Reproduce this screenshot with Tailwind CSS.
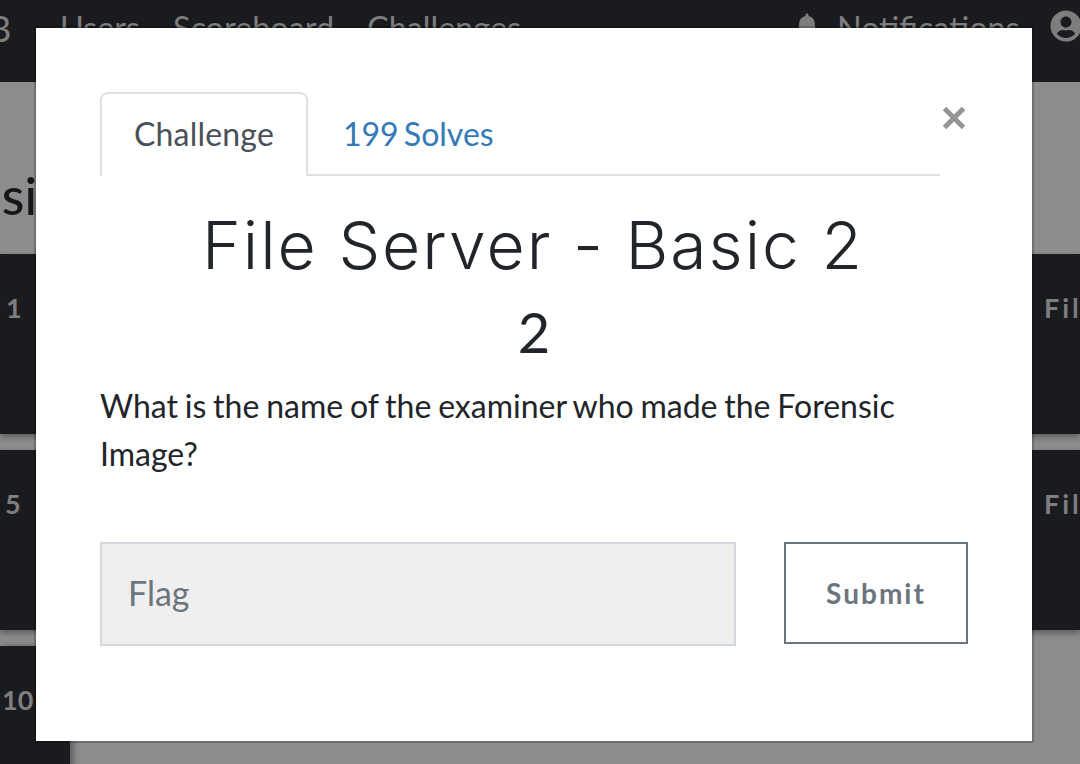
<!doctype html>
<html>
<head>
<meta charset="utf-8">
<script src="https://cdn.jsdelivr.net/npm/@tailwindcss/browser@4"></script>
</head>
<body class="m-0 bg-[#8c8c8c]">
<div class="relative w-[1080px] h-[764px] overflow-hidden bg-[#8c8c8c] font-['Lato',sans-serif]">
  <!-- page behind the backdrop -->
  <nav class="flex items-center h-[82px] bg-[#1a1b1f] text-[32.4px] text-[#7e7e7e] pb-[26px]">
    <span class="w-[60px] -ml-[12px] shrink-0 text-[36px]">B</span>
    <span class="ml-[12px]">Users</span>
    <span class="ml-[33px]">Scoreboard</span>
    <span class="ml-[33px]">Challenges</span>
    <svg class="ml-[275px] -mt-[4px] w-[22px] h-[26px] shrink-0 fill-[#7e7e7e]" viewBox="0 0 448 512"><path d="M224 512c35.32 0 63.97-28.65 63.97-64H160.03c0 35.35 28.65 64 63.97 64zm215.39-149.71c-19.32-20.76-55.47-51.99-55.47-154.29 0-77.7-54.48-139.9-127.94-155.16V32c0-17.67-14.32-32-31.98-32s-31.98 14.33-31.98 32v20.84C118.56 68.1 64.08 130.3 64.08 208c0 102.3-36.15 133.53-55.47 154.29-6 6.45-8.66 14.16-8.61 21.71.11 16.4 12.98 32 32.1 32h383.8c19.12 0 32-15.6 32.1-32 .05-7.55-2.61-15.26-8.61-21.71z"/></svg>
    <span class="ml-[19px] shrink-0">Notifications</span>
    <svg class="ml-[30px] -mt-[4px] w-[32px] h-[32px] shrink-0 fill-[#7e7e7e]" viewBox="0 0 496 512"><path d="M248 8C111 8 0 119 0 256s111 248 248 248 248-111 248-248S385 8 248 8zm0 96c48.6 0 88 39.4 88 88s-39.4 88-88 88-88-39.4-88-88 39.4-88 88-88zm0 344c-58.7 0-111.3-26.6-146.5-68.2 18.8-35.4 55.6-59.8 98.5-59.8 2.4 0 4.8.4 7.1 1.1 13 4.2 26.6 6.9 40.9 6.9 14.3 0 28-2.7 40.9-6.9 2.3-.7 4.7-1.1 7.1-1.1 42.9 0 79.7 24.4 98.5 59.8C359.3 421.4 306.7 448 248 448z"/></svg>
  </nav>
  <div class="h-[172px] flex items-center pt-[54px] -ml-[200px] text-[52px] font-medium text-[#15161a]"><span class="w-[262px] text-right shrink-0 whitespace-nowrap">Basic</span></div>
  <div class="grid grid-cols-2 gap-x-[40px] gap-y-[16px]">
    <div class="h-[180px] bg-[#1a1b1f] shadow-[0_3px_6px_rgba(0,0,0,0.35)] pt-[34px] pl-[6px] text-[27px] font-bold text-[#7e7e7e]">1</div>
    <div class="h-[180px] bg-[#1a1b1f] shadow-[0_3px_6px_rgba(0,0,0,0.35)] pt-[34px] pl-[484px] text-[27px] font-bold tracking-[3px] text-[#7e7e7e] overflow-hidden whitespace-nowrap">File</div>
    <div class="h-[180px] bg-[#1a1b1f] shadow-[0_3px_6px_rgba(0,0,0,0.35)] pt-[34px] pl-[5px] text-[27px] font-bold text-[#7e7e7e]">5</div>
    <div class="h-[180px] bg-[#1a1b1f] shadow-[0_3px_6px_rgba(0,0,0,0.35)] pt-[34px] pl-[484px] text-[27px] font-bold tracking-[3px] text-[#7e7e7e] overflow-hidden whitespace-nowrap">File</div>
    <div class="h-[180px] w-[70px] bg-[#1a1b1f] shadow-[3px_0_6px_rgba(0,0,0,0.35)] pt-[34px] pl-[2px] text-[27px] font-bold text-[#7e7e7e]">10</div>
  </div>

  <!-- modal -->
  <div class="absolute left-[36px] top-[28px] w-[996px] h-[713px] bg-white shadow-[0_0_0_2px_rgba(0,0,0,0.2)] pt-[64px] pl-[64px] pr-[92px] text-[#212529]">
    <button class="absolute right-[65px] top-[73px] w-[26px] h-[34px] flex items-center justify-center bg-transparent">
      <svg class="w-[24px] h-[24px]" viewBox="0 0 24 24"><path d="M2.5 2.5 L21.5 21.5 M21.5 2.5 L2.5 21.5" stroke="#959595" stroke-width="5" fill="none"/></svg>
    </button>
    <div class="flex border-b-2 border-[#dee2e6] text-[32px] h-[84px]">
      <div class="w-[208px] h-[84px] border-2 border-b-0 border-[#dee2e6] rounded-t-[8px] bg-white text-[#495057] flex items-center justify-center pb-[2px] tracking-[0.2px]">Challenge</div>
      <div class="ml-[35px] h-[82px] pt-[2px] text-[#337ab7] flex items-center [word-spacing:-3px]">199 Solves</div>
    </div>
    <h2 class="mt-[27px] w-[868px] -ml-[1px] text-center font-['Inter',sans-serif] text-[66px] leading-[84px] font-light tracking-[2px] text-[#212529] whitespace-nowrap">File Server - Basic 2</h2>
    <h3 class="w-[868px] text-center text-[56px] leading-[64px] font-normal text-[#212529] mt-[13px]">2</h3>
    <p class="mt-[18px] text-[32px] leading-[48px] text-[#212529] [word-spacing:-1.4px]">What is the name of the examiner who made the Forensic Image?</p>
    <div class="mt-[64px] flex items-start">
      <div class="w-[636px] h-[104px] shrink-0 border-2 border-[#d3d8de] bg-[#efefef] flex items-center pl-[26px] pb-[4px] text-[34px] text-[#6c757d]">Flag</div>
      <button class="ml-[48px] w-[184px] h-[102px] border-2 border-[#6c757d] bg-white text-[#6c757d] text-[28px] font-bold tracking-[2px] shrink-0">Submit</button>
    </div>
  </div>
</div>
</body>
</html>
